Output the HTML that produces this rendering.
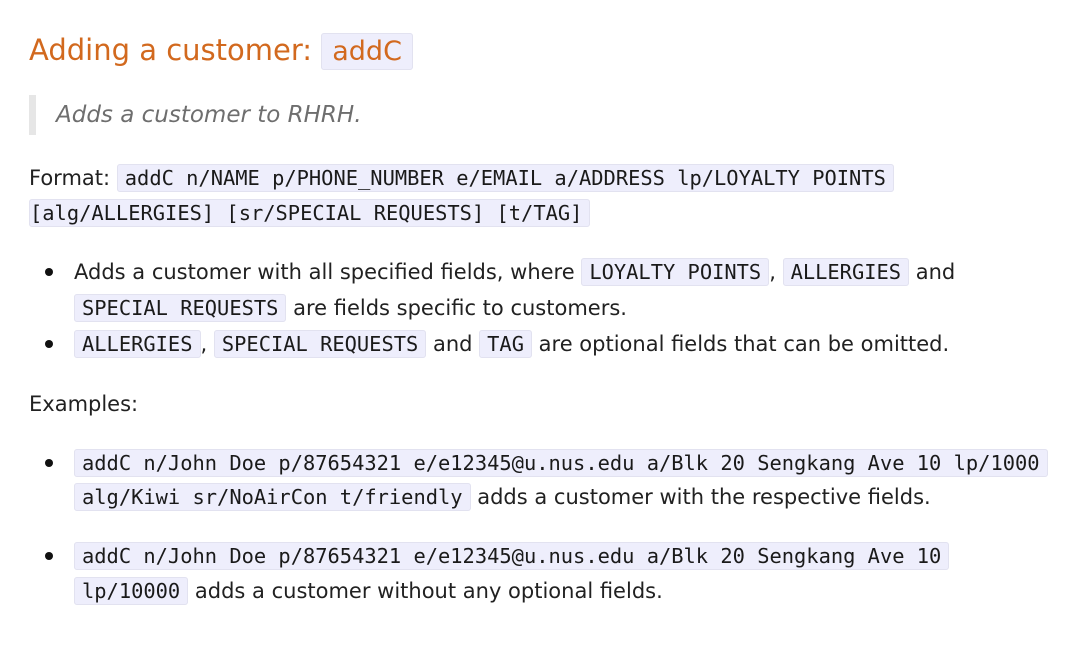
<!DOCTYPE html>
<html><head><meta charset="utf-8"><style>
body{margin:0;background:#fff;font-family:"DejaVu Sans","Liberation Sans",sans-serif;color:#212121;font-size:21px;}
.wrap{position:absolute;left:29px;top:0;width:1040px;}
h2{position:absolute;top:28px;left:0;margin:0;font-weight:normal;font-size:29px;color:#d2691e;line-height:44px;white-space:nowrap;font-family:"DejaVu Sans",sans-serif}
h2 code{font-family:"DejaVu Sans",sans-serif;font-size:27px;color:#d2691e;padding:2px 10px;}
code{font-family:"DejaVu Sans Mono","Liberation Mono",monospace;font-size:20.4px;background:#eeeefc;border:1px solid #e2e2f0;border-radius:3px;padding:1px 7px;color:#1a1a1a}
.bq{position:absolute;top:95px;left:0;height:40px;border-left:7px solid #e6e6e6;padding-left:20px;font-style:italic;color:#6e6e6e;font-size:23px;line-height:40px;white-space:nowrap}
.line{position:absolute;white-space:nowrap;line-height:36px}
.dot{position:absolute;left:16px;width:8px;height:8px;border-radius:50%;background:#111}
</style></head><body><div class="wrap">
<h2>Adding a customer: <code>addC</code></h2>
<div class="bq">Adds a customer to RHRH.</div>
<div class="line" style="top:160px;left:0">Format: <code>addC n/NAME p/PHONE_NUMBER e/EMAIL a/ADDRESS lp/LOYALTY POINTS</code></div>
<div class="line" style="top:195px;left:0"><code style="padding-left:0">[alg/ALLERGIES] [sr/SPECIAL REQUESTS] [t/TAG]</code></div>
<div class="dot" style="top:268px"></div>
<div class="line" style="top:254px;left:45px">Adds a customer with all specified fields, where <code>LOYALTY POINTS</code>, <code>ALLERGIES</code> and</div>
<div class="line" style="top:290px;left:45px"><code>SPECIAL REQUESTS</code> are fields specific to customers.</div>
<div class="dot" style="top:340px"></div>
<div class="line" style="top:326px;left:45px"><code>ALLERGIES</code>, <code>SPECIAL REQUESTS</code> and <code>TAG</code> are optional fields that can be omitted.</div>
<div class="line" style="top:386px;left:0">Examples:</div>
<div class="dot" style="top:459px"></div>
<div class="line" style="top:445px;left:45px"><code>addC n/John Doe p/87654321 e/e12345@u.nus.edu a/Blk 20 Sengkang Ave 10 lp/1000</code></div>
<div class="line" style="top:479px;left:45px"><code>alg/Kiwi sr/NoAirCon t/friendly</code> adds a customer with the respective fields.</div>
<div class="dot" style="top:552px"></div>
<div class="line" style="top:538px;left:45px"><code>addC n/John Doe p/87654321 e/e12345@u.nus.edu a/Blk 20 Sengkang Ave 10</code></div>
<div class="line" style="top:573px;left:45px"><code>lp/10000</code> adds a customer without any optional fields.</div>
</div></body></html>
